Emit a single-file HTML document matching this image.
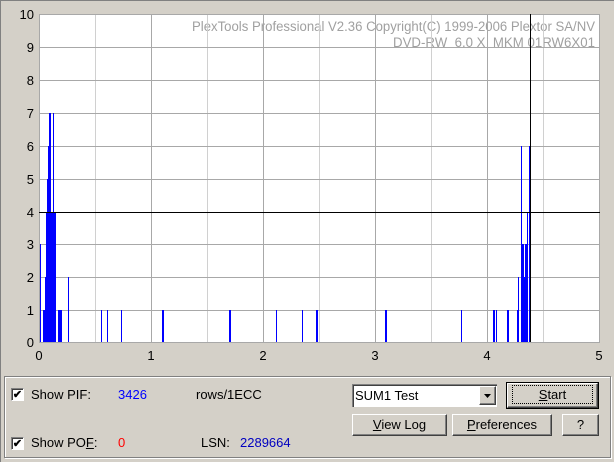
<!DOCTYPE html>
<html><head><style>
body{margin:0;width:614px;height:462px;background:#d4d0c8;font-family:"Liberation Sans",sans-serif;position:relative;overflow:hidden}
.a{position:absolute}
.t{font-size:13px;color:#000}
.btn{position:absolute;background:#d4d0c8;border-top:1px solid #fff;border-left:1px solid #fff;border-right:1px solid #404040;border-bottom:1px solid #404040;box-shadow:inset -1px -1px 0 #808080;font-size:13px;text-align:center;box-sizing:border-box}
.cb{position:absolute;width:13px;height:13px;background:#fff;border-top:1px solid #808080;border-left:1px solid #808080;border-right:1px solid #fff;border-bottom:1px solid #fff;box-shadow:inset 1px 1px 0 #404040;box-sizing:border-box;font-size:11px;line-height:12px;text-align:center;font-weight:bold}
</style></head><body>
<div class="a" style="left:0;top:0;width:614px;height:1px;background:#808080"></div>
<div class="a" style="left:0;top:0;width:1px;height:462px;background:#808080"></div>
<svg class="a" style="left:0;top:0" width="614" height="370">
<rect x="39" y="14" width="561" height="328" fill="#fff"/>
<g font-family="Liberation Sans" font-size="13.5" fill="#a0a0a0">
<text x="192" y="31" textLength="403" lengthAdjust="spacingAndGlyphs">PlexTools Professional V2.36 Copyright(C) 1999-2006 Plextor SA/NV</text>
<text x="393" y="47" textLength="202" lengthAdjust="spacingAndGlyphs" xml:space="preserve">DVD-RW  6.0 X  MKM 01RW6X01</text>
</g>
<g stroke="#d0d0d0" stroke-width="1">
<line x1="95.5" y1="14" x2="95.5" y2="342"/><line x1="207.5" y1="14" x2="207.5" y2="342"/>
<line x1="319.5" y1="14" x2="319.5" y2="342"/><line x1="431.5" y1="14" x2="431.5" y2="342"/>
<line x1="543.5" y1="14" x2="543.5" y2="342"/>
</g>
<g stroke="#a8a8a8" stroke-width="1">
<line x1="151.5" y1="14" x2="151.5" y2="342"/><line x1="263.5" y1="14" x2="263.5" y2="342"/>
<line x1="375.5" y1="14" x2="375.5" y2="342"/><line x1="487.5" y1="14" x2="487.5" y2="342"/>
<line x1="39" y1="14.5" x2="600" y2="14.5"/><line x1="39" y1="47.5" x2="600" y2="47.5"/>
<line x1="39" y1="80.5" x2="600" y2="80.5"/><line x1="39" y1="113.5" x2="600" y2="113.5"/>
<line x1="39" y1="146.5" x2="600" y2="146.5"/><line x1="39" y1="179.5" x2="600" y2="179.5"/>
<line x1="39" y1="244.5" x2="600" y2="244.5"/><line x1="39" y1="277.5" x2="600" y2="277.5"/>
<line x1="39" y1="310.5" x2="600" y2="310.5"/><line x1="39" y1="342.5" x2="600" y2="342.5"/>
<line x1="39.5" y1="14" x2="39.5" y2="342"/><line x1="599.5" y1="14" x2="599.5" y2="342"/>
</g>
<g fill="#0000ff">
<rect x="40" y="244" width="1" height="98"/>
<rect x="43" y="310" width="2" height="32"/>
<rect x="45" y="277" width="1" height="65"/>
<rect x="46" y="212" width="1" height="130"/>
<rect x="47" y="179" width="1" height="163"/>
<rect x="48" y="146" width="1" height="196"/>
<rect x="49" y="113" width="2" height="229"/>
<rect x="51" y="212" width="5" height="130"/>
<rect x="53" y="113" width="1" height="229"/>
<rect x="58" y="310" width="4" height="32"/>
<rect x="68" y="277" width="1" height="65"/>
<rect x="101" y="310" width="1" height="32"/><rect x="107" y="310" width="1" height="32"/>
<rect x="121" y="310" width="1" height="32"/><rect x="162" y="310" width="2" height="32"/>
<rect x="229" y="310" width="2" height="32"/><rect x="276" y="310" width="1" height="32"/>
<rect x="302" y="310" width="1" height="32"/><rect x="316" y="310" width="2" height="32"/>
<rect x="385" y="310" width="2" height="32"/><rect x="461" y="310" width="1" height="32"/>
<rect x="493" y="310" width="2" height="32"/><rect x="496" y="310" width="1" height="32"/>
<rect x="507" y="310" width="2" height="32"/><rect x="517" y="310" width="1" height="32"/>
<rect x="518" y="277" width="1" height="65"/><rect x="521" y="146" width="1" height="196"/>
<rect x="522" y="244" width="2" height="98"/><rect x="525" y="244" width="2" height="98"/>
<rect x="524" y="277" width="1" height="65"/><rect x="527" y="212" width="1" height="130"/>
<rect x="529" y="146" width="1" height="196"/>
</g>
<line x1="39" y1="212.5" x2="600" y2="212.5" stroke="#000"/>
<line x1="530.5" y1="14" x2="530.5" y2="342" stroke="#000"/>
<g font-family="Liberation Sans" font-size="13" fill="#000" text-anchor="end">
<text x="34" y="19">10</text><text x="34" y="52">9</text><text x="34" y="85">8</text>
<text x="34" y="118">7</text><text x="34" y="151">6</text><text x="34" y="184">5</text>
<text x="34" y="217">4</text><text x="34" y="249">3</text><text x="34" y="282">2</text>
<text x="34" y="315">1</text><text x="34" y="347">0</text>
</g>
<g font-family="Liberation Sans" font-size="13" fill="#000" text-anchor="middle">
<text x="39" y="360">0</text><text x="151" y="360">1</text><text x="263" y="360">2</text>
<text x="375" y="360">3</text><text x="487" y="360">4</text><text x="599" y="360">5</text>
</g>
</svg>
<div class="a" style="left:4px;top:376px;width:605px;height:80px;border:1px solid #808080;box-shadow:1px 1px 0 #fff,inset 1px 1px 0 #fff"></div>
<div class="cb" style="left:11px;top:388px">✔</div>
<div class="a t" style="left:31px;top:387px">Show PIF:</div>
<div class="a t" style="left:118px;top:387px;color:#0000ff">3426</div>
<div class="a t" style="left:196px;top:387px">rows/1ECC</div>
<div class="cb" style="left:11px;top:437px">✔</div>
<div class="a t" style="left:31px;top:435px">Show PO<u>F</u>:</div>
<div class="a t" style="left:118px;top:435px;color:#ff0000">0</div>
<div class="a t" style="left:201px;top:435px">LSN:</div>
<div class="a t" style="left:240px;top:435px;color:#0000c0">2289664</div>
<div class="a" style="left:352px;top:384px;width:145px;height:23px;background:#fff;border-top:1px solid #808080;border-left:1px solid #808080;box-shadow:inset 1px 1px 0 #404040;box-sizing:border-box"></div>
<div class="a t" style="left:355px;top:388px;font-size:13px">SUM1 Test</div>
<div class="btn" style="left:479px;top:386px;width:17px;height:19px"><svg width="15" height="17"><path d="M4 7h7l-3.5 4z" fill="#000"/></svg></div>
<div class="a" style="left:506px;top:382px;width:93px;height:27px;border:1px solid #000;box-sizing:border-box"></div>
<div class="btn" style="left:507px;top:383px;width:91px;height:25px;line-height:22px"><span style="outline:1px dotted #000;outline-offset:0;display:inline-block;width:79px;line-height:17px;margin-top:2px"><u>S</u>tart</span></div>
<div class="btn" style="left:352px;top:414px;width:95px;height:22px;line-height:20px"><u>V</u>iew Log</div>
<div class="btn" style="left:452px;top:414px;width:100px;height:22px;line-height:20px"><u>P</u>references</div>
<div class="btn" style="left:562px;top:414px;width:37px;height:22px;line-height:20px">?</div>
</body></html>
